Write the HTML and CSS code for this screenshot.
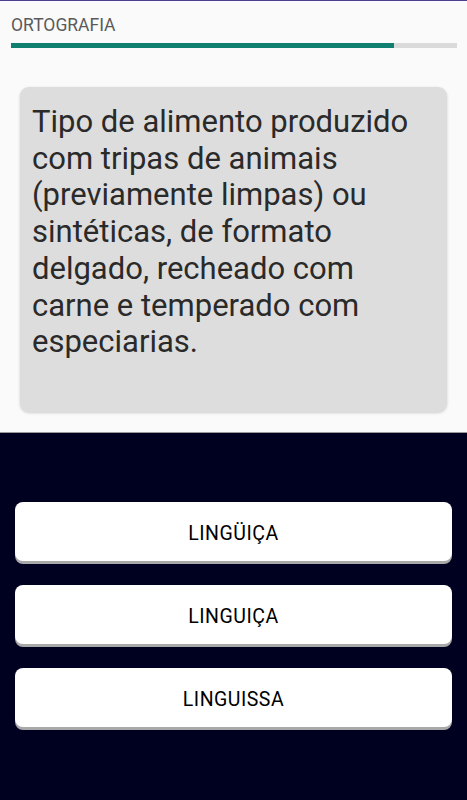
FILE: index.html
```html
<!DOCTYPE html>
<html>

<head>
    <title>Ortografia</title>
    <link rel="stylesheet" href="styles.css">
</head>

<body>
    <div class="top">
        <div class="category">ORTOGRAFIA</div>

        <!-- Quiz progress -->
        <div class="progress">
            <div class="progress-fill" style="width: 85.9%"></div>
        </div>

        <div class="card">
            <p class="question">Tipo de alimento produzido com tripas de animais (previamente limpas) ou sintéticas, de formato delgado, recheado com carne e temperado com especiarias.</p>
        </div>
    </div>

    <!-- Answer options -->
    <div class="answers">
        <button class="option">LINGÜIÇA</button>
        <button class="option">LINGUIÇA</button>
        <button class="option">LINGUISSA</button>
    </div>
</body>

</html>
```

FILE: styles.css
```css
html, body {
    height: 100%;
}

body {
    font-family: Roboto, "Liberation Sans", sans-serif;
    margin: 0;
    padding: 0;
    background-color: #000020;
    display: flex;
    flex-direction: column;
}

.top {
    height: 432px;
    background-color: #fafafa;
    border-top: 1px solid #4b3f8f;
    box-sizing: border-box;
    padding: 14px 10px 0 11px;
}

.category {
    font-size: 17.5px;
    line-height: 20px;
    color: #5a5a5a;
}

.progress {
    height: 5px;
    margin-top: 8px;
    background-color: #dadada;
}

.progress-fill {
    height: 100%;
    background-color: #0f8070;
}

.card {
    height: 325px;
    margin: 39px 10px 0 9px;
    padding: 17px 10px 0 12px;
    box-sizing: border-box;
    background-color: #dddddd;
    border-radius: 9px;
    box-shadow: 0 1px 3px rgba(0, 0, 0, 0.18);
}

.question {
    margin: 0;
    font-size: 31px;
    line-height: 36.7px;
    color: #2a2a2a;
}

.answers {
    flex: 1;
    border-top: 1px solid #9a9a9a;
    padding: 69px 15px 0 15px;
    display: flex;
    flex-direction: column;
    gap: 24px;
}

.option {
    height: 59px;
    padding-top: 4px;
    background-color: #ffffff;
    border: none;
    border-radius: 8px;
    box-shadow: 0 3px 0 #a8a8a8;
    font-family: Roboto, "Liberation Sans", sans-serif;
    font-size: 19.5px;
    font-weight: 400;
    letter-spacing: 0.5px;
    color: #000000;
    cursor: pointer;
}
```
